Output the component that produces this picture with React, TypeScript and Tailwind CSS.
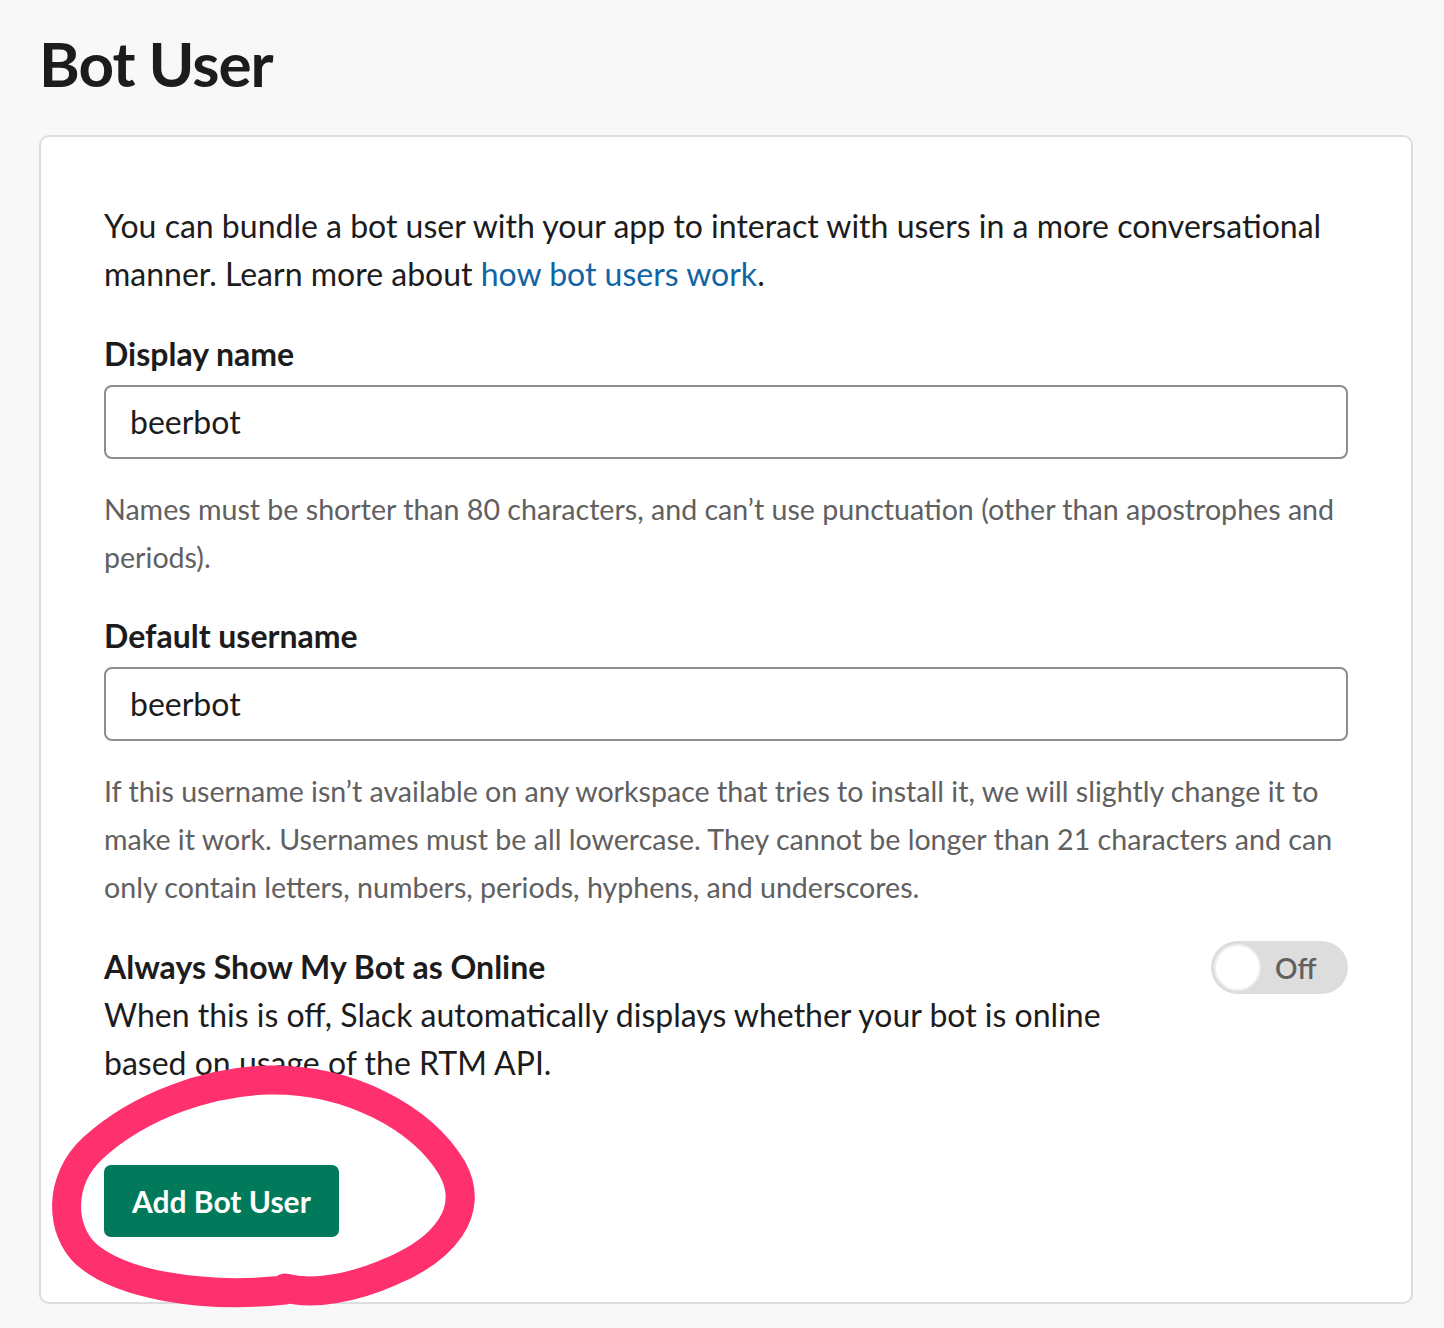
import React from "react";

const font = { fontFamily: 'Lato, "Noto Sans", sans-serif' };

export default function App() {
  return (
    <div
      className="relative min-h-[1328px] w-[1444px] bg-[#f8f8f8] text-[#1d1c1d]"
      style={font}
    >
      <div className="pl-[39px] pr-[31px] pt-[23px]">
        <h1 className="text-[62px] font-bold leading-[80px] tracking-[-1px] text-[#1d1c1d]">
          Bot User
        </h1>
        <div className="mt-[32px] rounded-[10px] border-2 border-[#dddddd] bg-white pb-[65px] pl-[63px] pr-[63px] pt-[65px]">
          <p className="text-[32px] leading-[48px]">
            You can bundle a bot user with your app to interact with users in a more conversational manner. Learn more about{" "}
            <a className="text-[#1264a3]" href="#">
              how bot users work
            </a>
            .
          </p>

          <div className="mt-[32px] text-[32px] font-bold leading-[48px]">Display name</div>
          <div className="mt-[7px] flex h-[74px] items-center rounded-[8px] border-2 border-[#8d8d8d] px-[24px] text-[32px]">
            beerbot
          </div>
          <p className="mt-[26px] text-[28.6px] leading-[48px] text-[#616061]">
            Names must be shorter than 80 characters, and can’t use punctuation (other than apostrophes and periods).
          </p>

          <div className="mt-[31px] text-[32px] font-bold leading-[48px]">Default username</div>
          <div className="mt-[7px] flex h-[74px] items-center rounded-[8px] border-2 border-[#8d8d8d] px-[24px] text-[32px]">
            beerbot
          </div>
          <p className="mt-[26px] text-[28.6px] leading-[48px] text-[#616061]">
            If this username isn’t available on any workspace that tries to install it, we will slightly change it to make it work. Usernames must be all lowercase. They cannot be longer than 21 characters and can only contain letters, numbers, periods, hyphens, and underscores.
          </p>

          <div className="mt-[32px] flex items-start justify-between">
            <div className="w-[1040px]">
              <div className="text-[32px] font-bold leading-[48px]">Always Show My Bot as Online</div>
              <div className="text-[32px] leading-[48px]">
                When this is off, Slack automatically displays whether your bot is online based on usage of the RTM API.
              </div>
            </div>
            <div className="mt-[-2px] flex h-[53px] w-[137px] items-center rounded-full bg-[#dddddd] p-[3px]">
              <div className="h-[47px] w-[47px] rounded-full border-2 border-[#eeeeee] bg-white" />
              <span className="ml-[14px] text-[28px] font-semibold text-[#616061]">Off</span>
            </div>
          </div>

          <button className="mt-[78px] flex h-[72px] items-center rounded-[7px] bg-[#007a5a] px-[28px] text-[30px] font-bold text-white">
            Add Bot User
          </button>
        </div>
      </div>

      <svg
        className="pointer-events-none absolute left-0 top-0"
        width="1444"
        height="1328"
        viewBox="0 0 1444 1328"
      >
        <path
          d="M 285 1290 C 200 1299, 120 1284, 86 1254 C 60 1230, 58 1180, 93 1148 C 140 1105, 210 1081, 270 1080 C 350 1079, 422 1118, 452 1168 C 477 1212, 442 1250, 392 1271 C 352 1289, 312 1295, 285 1288"
          fill="none"
          stroke="#ff306e"
          strokeWidth="29"
          strokeLinecap="round"
          strokeLinejoin="round"
        />
      </svg>
    </div>
  );
}
